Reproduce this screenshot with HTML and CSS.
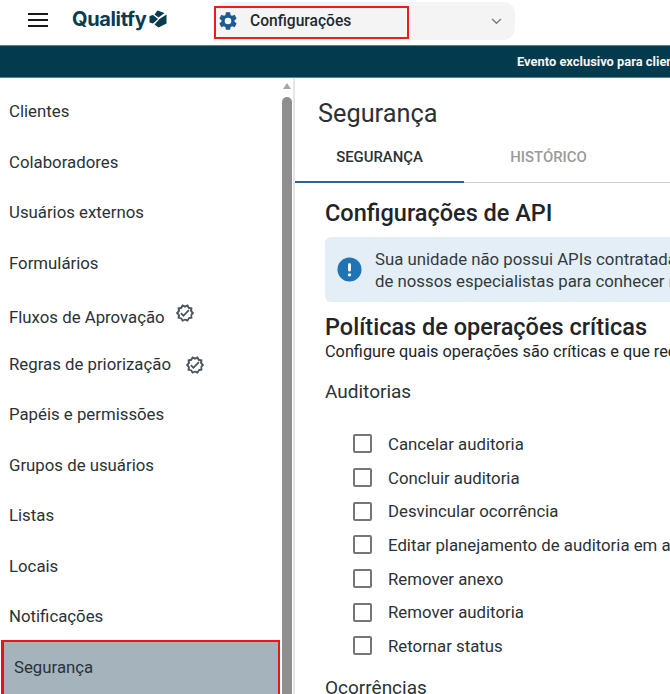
FILE: index.html
```html
<!DOCTYPE html>
<html lang="pt-BR">
<head>
<meta charset="utf-8">
<title>Segurança</title>
<link rel="stylesheet" href="styles.css">
</head>
<body>
<header class="topbar">
  <button class="menu-btn" aria-label="Menu"><span></span><span></span><span></span></button>
  <div class="logo"><span class="logo-text">Qualitfy</span>
    <svg class="logo-mark" viewBox="0 0 18 18" width="18" height="18"><path fill="#0b3b4f" d="M8.5 .5 L15.5 3 L9.5 7.5 L5.5 4.5 Z M4 5 L9 9 L4 13.5 L.5 12.5 L.5 6 Z M10.5 9 L17.5 4.5 L17.5 13.5 L9.5 17.5 L5.5 14.5 Z"/></svg>
  </div>
  <div class="module">
    <div class="module-label">
      <svg class="gear" viewBox="0 0 24 24" width="22" height="22"><path fill="#1d5a94" d="M19.14 12.94c.04-.3.06-.61.06-.94s-.02-.64-.07-.94l2.03-1.58a.49.49 0 0 0 .12-.61l-1.92-3.32a.49.49 0 0 0-.59-.22l-2.39.96a7 7 0 0 0-1.62-.94l-.36-2.54a.48.48 0 0 0-.48-.41h-3.84a.48.48 0 0 0-.47.41l-.36 2.54c-.59.24-1.13.57-1.62.94l-2.39-.96a.49.49 0 0 0-.59.22L2.74 8.87a.48.48 0 0 0 .12.61l2.03 1.58c-.05.3-.09.63-.09.94s.02.64.07.94l-2.03 1.58a.49.49 0 0 0-.12.61l1.92 3.32c.12.22.37.29.59.22l2.39-.96c.5.38 1.03.7 1.62.94l.36 2.54c.05.24.24.41.48.41h3.84c.24 0 .44-.17.47-.41l.36-2.54c.59-.24 1.13-.56 1.62-.94l2.39.96c.22.08.47 0 .59-.22l1.92-3.32a.48.48 0 0 0-.12-.61zM12 15.6A3.6 3.6 0 1 1 12 8.4a3.6 3.6 0 0 1 0 7.2z"/></svg>
      <span>Configurações</span>
    </div>
    <svg class="chevron" viewBox="0 0 12 8" width="11" height="7"><path fill="none" stroke="#6d7f88" stroke-width="1.6" d="M1 1.2 L6 6 L11 1.2"/></svg>
  </div>
</header>
<div class="banner"><span>Evento exclusivo para clientes Qualitfy</span></div>
<div class="layout">
  <aside class="sidebar">
    <nav class="nav">
      <a class="nav-item">Clientes</a>
      <a class="nav-item">Colaboradores</a>
      <a class="nav-item">Usuários externos</a>
      <a class="nav-item">Formulários</a>
      <a class="nav-item nav-fluxos">Fluxos de Aprovação
        <svg class="badge badge-up" viewBox="0 0 24 24" width="20" height="20"><path fill="#4a555b" d="M23 12l-2.44-2.79.34-3.69-3.61-.82-1.89-3.2L12 2.96 8.6 1.5 6.71 4.69 3.1 5.5l.34 3.7L1 12l2.44 2.79-.34 3.7 3.61.82L8.6 22.5l3.4-1.47 3.4 1.46 1.89-3.19 3.61-.82-.34-3.69L23 12zm-4.51 1.97.24 2.61-2.56.58-1.34 2.26L12 18.87l-2.41 1.03-1.34-2.25-2.56-.58.24-2.62L4.2 12l1.73-1.98-.24-2.59 2.56-.57 1.34-2.26L12 5.63l2.41-1.03 1.34 2.26 2.56.58-.24 2.6L19.8 12l-1.31 1.97z"/><path fill="#4a555b" d="M10.09 13.75l-2.32-2.33-1.48 1.49 3.8 3.81 7.34-7.36-1.48-1.49z"/></svg>
      </a>
      <a class="nav-item nav-regras">Regras de priorização
        <svg class="badge badge-regras" viewBox="0 0 24 24" width="20" height="20"><path fill="#4a555b" d="M23 12l-2.44-2.79.34-3.69-3.61-.82-1.89-3.2L12 2.96 8.6 1.5 6.71 4.69 3.1 5.5l.34 3.7L1 12l2.44 2.79-.34 3.7 3.61.82L8.6 22.5l3.4-1.47 3.4 1.46 1.89-3.19 3.61-.82-.34-3.69L23 12zm-4.51 1.97.24 2.61-2.56.58-1.34 2.26L12 18.87l-2.41 1.03-1.34-2.25-2.56-.58.24-2.62L4.2 12l1.73-1.98-.24-2.59 2.56-.57 1.34-2.26L12 5.63l2.41-1.03 1.34 2.26 2.56.58-.24 2.6L19.8 12l-1.31 1.97z"/><path fill="#4a555b" d="M10.09 13.75l-2.32-2.33-1.48 1.49 3.8 3.81 7.34-7.36-1.48-1.49z"/></svg>
      </a>
      <a class="nav-item">Papéis e permissões</a>
      <a class="nav-item">Grupos de usuários</a>
      <a class="nav-item">Listas</a>
      <a class="nav-item">Locais</a>
      <a class="nav-item">Notificações</a>
      <a class="nav-item nav-active">Segurança</a>
    </nav>
    <div class="scrollbar"><span class="scroll-arrow"></span><span class="scroll-thumb"></span></div>
  </aside>
  <main class="main">
    <h1 class="page-title">Segurança</h1>
    <div class="tabs">
      <div class="tab tab-active">SEGURANÇA</div>
      <div class="tab">HISTÓRICO</div>
    </div>
    <section class="content">
      <h2 class="section-title">Configurações de API</h2>
      <div class="alert">
        <svg class="alert-icon" viewBox="0 0 26 26" width="25" height="25"><circle cx="13" cy="13" r="12.5" fill="#1f74b5"/><rect x="11.5" y="6.5" width="3" height="8.5" rx="1.2" fill="#fff"/><circle cx="13" cy="18.5" r="1.7" fill="#fff"/></svg>
        <p class="alert-text">Sua unidade não possui APIs contratadas. Entre em contato com um<br>de nossos especialistas para conhecer nossas soluções de integração.</p>
      </div>
      <h2 class="section-title policy-title">Políticas de operações críticas</h2>
      <p class="policy-desc">Configure quais operações são críticas e que requerem confirmação do usuário.</p>
      <h3 class="group-title">Auditorias</h3>
      <ul class="checks">
        <li class="check"><span class="box"></span>Cancelar auditoria</li>
        <li class="check"><span class="box"></span>Concluir auditoria</li>
        <li class="check"><span class="box"></span>Desvincular ocorrência</li>
        <li class="check"><span class="box"></span>Editar planejamento de auditoria em andamento</li>
        <li class="check"><span class="box"></span>Remover anexo</li>
        <li class="check"><span class="box"></span>Remover auditoria</li>
        <li class="check"><span class="box"></span>Retornar status</li>
      </ul>
      <h3 class="group-title group-next">Ocorrências</h3>
    </section>
  </main>
</div>
</body>
</html>
```
FILE: styles.css
```css
* { box-sizing: border-box; }
html, body { margin: 0; height: 694px; overflow: hidden; }
body { width: 670px; font-family: Roboto, "Liberation Sans", sans-serif; color: #212529; background: #fff; display: flex; flex-direction: column; }

.topbar { height: 45px; flex: none; display: flex; align-items: flex-start; white-space: nowrap; }
.menu-btn { width: 20px; height: 14px; margin: 13px 0 0 28px; padding: 0; border: 0; background: none; display: flex; flex-direction: column; justify-content: space-between; }
.menu-btn span { display: block; height: 2px; background: #1a1a1a; }
.logo { width: 122px; margin-left: 24px; display: flex; align-items: center; gap: 3px; height: 38px; }
.logo-text { font-family: Inter, Roboto, sans-serif; font-weight: 700; font-size: 20px; letter-spacing: -0.35px; color: #0b3b4f; }
.logo-mark { flex: none; margin-top: 0; }

.module { position: relative; width: 300px; height: 38px; margin: 2px 0 0 21px; background: #f4f4f4; border-radius: 12px; display: flex; align-items: center; justify-content: flex-end; padding-right: 13px; }
.module-label { position: absolute; left: -1px; top: 4px; width: 195px; height: 33px; border: 2px solid #ee1c1c; display: flex; align-items: center; gap: 11px; padding: 0 0 4px 1px; font-size: 15.6px; font-weight: 500; color: #1f2a30; }
.gear { flex: none; }

.banner { height: 33px; flex: none; background: #033a4e; border-top: 1px solid #5e8190; border-bottom: 1px solid #5e8190; color: #f2f5f6; font-size: 12.9px; font-weight: 700; line-height: 31px; padding-left: 517px; white-space: nowrap; overflow: hidden; }

.layout { flex: 1; display: flex; min-height: 0; }
.sidebar { width: 295px; flex: none; display: flex; border-right: 2px solid #e6e6e6; padding-left: 1px; }
.nav { width: 280px; flex: none; padding-top: 8px; display: flex; flex-direction: column; }
.nav-item { height: 50.5px; flex: none; display: flex; align-items: center; padding-left: 8px; font-size: 16.8px; color: #2b3236; white-space: nowrap; }
.nav-fluxos { height: 56px; padding-top: 2px; }
.nav-regras { height: 45px; padding-bottom: 5px; }
.badge { flex: none; }
.badge-up { margin: -8px 0 0 10px; }
.badge-regras { margin: 2px 0 0 14px; }
.nav-active { width: 279px; height: 56px; margin-top: -2px; padding: 0 0 3px 11px; background: #a4b3bc; border: 2px solid #f01414; border-bottom-width: 0; box-shadow: inset 1px 0 0 #1d5a94; }

.scrollbar { width: 12px; flex: none; display: flex; flex-direction: column; align-items: center; padding-top: 5px; }
.scroll-arrow { width: 0; height: 0; border-left: 4px solid transparent; border-right: 4px solid transparent; border-bottom: 6px solid #a6a6a6; }
.scroll-thumb { margin-top: 8px; width: 10px; flex: 1; border-radius: 5px 5px 0 0; background: #8f8f8f; }

.main { flex: 1; min-width: 0; overflow: hidden; }
.page-title { margin: 21px 0 0 23px; font-size: 25.3px; font-weight: 400; line-height: 30px; color: #2b3236; white-space: nowrap; }
.tabs { display: flex; margin-top: 13px; height: 41px; border-bottom: 1px solid #cfcfcf; }
.tab { width: 169px; text-align: center; font-size: 14.9px; font-weight: 500; line-height: 31px; color: #9a9a9a; }
.tab-active { color: #2b3236; border-bottom: 2px solid #2c6493; height: 41px; }

.content { padding: 17px 0 0 30px; width: 700px; }
.section-title { margin: 0; font-size: 23.5px; font-weight: 500; line-height: 26px; color: #212529; white-space: nowrap; }
.alert { margin-top: 11px; width: 520px; height: 65px; background: #e3eef6; border-radius: 6px; display: flex; align-items: center; gap: 13px; padding-left: 12px; }
.alert-icon { flex: none; }
.alert-text { margin: 0; font-size: 16.8px; line-height: 22px; color: #333b40; white-space: nowrap; }
.policy-title { margin-top: 12px; }
.policy-desc { margin: 3px 0 0; font-size: 16.3px; line-height: 18px; white-space: nowrap; color: #212529; }
.group-title { margin: 20px 0 0; font-size: 19px; font-weight: 400; line-height: 22px; color: #2b3236; white-space: nowrap; }
.checks { list-style: none; margin: 24px 0 0; padding: 0 0 0 28px; }
.check { height: 33.7px; display: flex; align-items: center; gap: 16px; font-size: 16.8px; color: #2b3236; white-space: nowrap; }
.box { width: 19px; height: 19px; flex: none; border: 2px solid #767676; border-radius: 2px; background: #fff; }
.group-next { margin-top: 14px; }
```
